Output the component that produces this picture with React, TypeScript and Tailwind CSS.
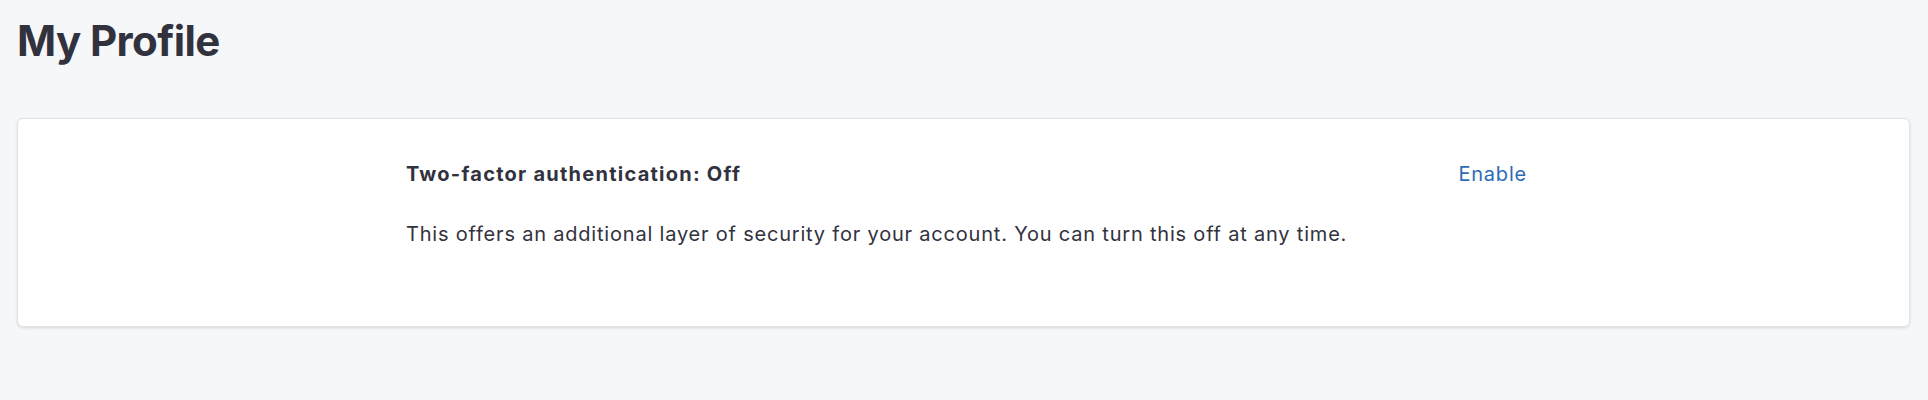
import React from "react";

export default function App() {
  return (
    <div className="min-h-[400px] w-full bg-[#f6f7f9] pl-[17px] pr-[18px] pt-[16px] font-['Inter','Noto_Sans',sans-serif] text-[#32323e]">
      <h1 className="text-[42px] font-bold leading-[1.2] tracking-[-0.6px]">My Profile</h1>
      <div className="mt-[52px] h-[209px] rounded-[6px] border border-[#e3e4e8] bg-white shadow-[0_1px_3px_rgba(0,0,0,0.12)]">
        <div className="pl-[388px] pr-[382px] pt-[41px]">
          <div className="flex items-start justify-between">
            <div className="text-[20px] font-bold leading-[28px] tracking-[1.25px]">Two-factor authentication: Off</div>
            <a className="text-[20px] leading-[28px] tracking-[0.8px] text-[#2e6bb5]" href="#">Enable</a>
          </div>
          <p className="mt-[32px] text-[20px] leading-[28px] tracking-[0.8px]">
            This offers an additional layer of security for your account. You can turn this off at any time.
          </p>
        </div>
      </div>
    </div>
  );
}
